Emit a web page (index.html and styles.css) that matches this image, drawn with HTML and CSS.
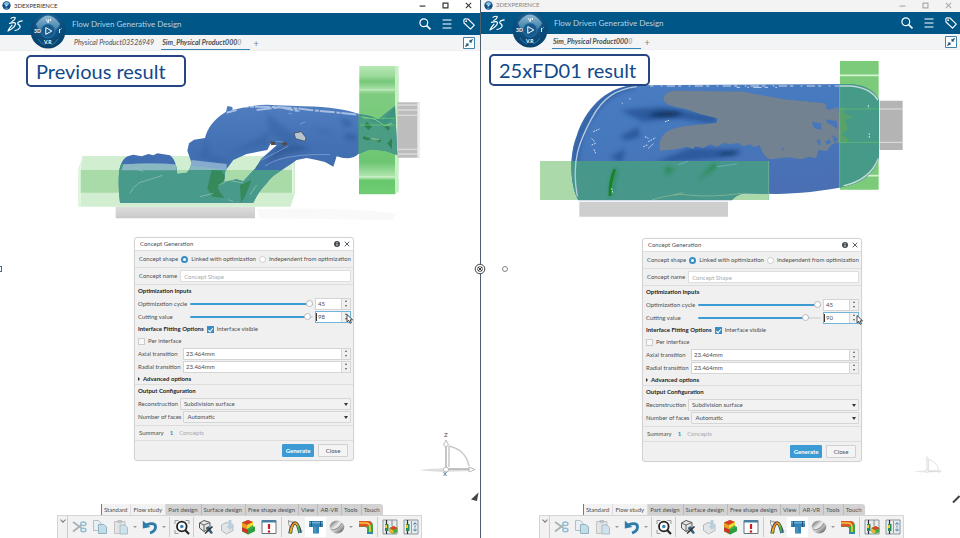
FILE: index.html
```html
<!DOCTYPE html>
<html lang="en">
<head>
<meta charset="utf-8">
<title>Flow Driven Generative Design</title>
<link rel="stylesheet" href="styles.css">
</head>
<body>
<svg class="defs" aria-hidden="true">
  <defs>
    <radialGradient id="compassFill" cx="50%" cy="30%" r="70%"><stop offset="0" stop-color="#2f7bac"/><stop offset=".6" stop-color="#0c4d7d"/><stop offset="1" stop-color="#083f69"/></radialGradient>
    <linearGradient id="compassTop" x1="0" y1="0" x2="0" y2="1"><stop offset="0" stop-color="#8fb9d2"/><stop offset="1" stop-color="#3d7fa8"/></linearGradient>
    <linearGradient id="rainbow" x1="0" y1="0" x2="1" y2="1"><stop offset="0" stop-color="#d8322a"/><stop offset=".35" stop-color="#f0b31e"/><stop offset=".65" stop-color="#4db548"/><stop offset="1" stop-color="#2a8fc4"/></linearGradient>
    <linearGradient id="metal" x1="0" y1="0" x2="1" y2="1"><stop offset="0" stop-color="#555"/><stop offset=".45" stop-color="#eee"/><stop offset="1" stop-color="#444"/></linearGradient>
  </defs>
  <symbol id="i-app" viewBox="0 0 10 10"><circle cx="5" cy="5" r="4.6" fill="#0d4f86"/><path d="M1.5 3.4Q5-1 8.5 3.4L5 5z" fill="#7fc0e6"/><path d="M4 3.8l2.6 1.3L4 6.5z" fill="#fff"/><path d="M3.5 8h3" stroke="#6fb3dd"/></symbol>
  <symbol id="i-ds" viewBox="0 0 16 17"><g fill="none" stroke="#fff" stroke-width="1.2" stroke-linecap="round" stroke-linejoin="round"><path d="M4 2.2Q7.200.6 8.200 1.700Q8.400 3.600 5 5.600"/><path d="M2.500 7.400Q8.800 5.600 8.400 8.200Q7.600 12 1 15Q2.600 11.800 5 9.200" /><path d="M15.200 4.800Q10.200 5.800 10.800 7.900Q13.800 9.600 12.900 11.700Q11.500 14 8 14.500"/></g></symbol>
  <symbol id="i-compass" viewBox="0 0 36 36"><circle cx="18" cy="18" r="17.5" fill="url(#compassFill)"/><path d="M6 11Q18-6 30 11Q27 18 23 17Q18 11 13 17Q8 18 6 11z" fill="url(#compassTop)"/><circle cx="18" cy="18" r="7" fill="#175b8d" stroke="#3b82b0" stroke-width=".6"/><path d="M15.8 14.6v6.8l6-3.4z" fill="none" stroke="#fff" stroke-width="1"/><path d="M16 6l2 3M19 6l-1 4M20.5 6v2" stroke="#fff" stroke-width=".9"/><path d="M8 26q3 5 7 6M28 26q-3 5-7 6" stroke="#2f79a8" fill="none"/><path d="M29.500 16v4M31.500 15.500l-1 1" stroke="#fff" stroke-width=".9"/></symbol>
  <symbol id="i-search" viewBox="0 0 12 12"><circle cx="4.8" cy="4.8" r="3.9" fill="none" stroke="#fff" stroke-width="1.2"/><path d="M7.6 7.6l3.9 3.7" stroke="#fff" stroke-width="1.6"/></symbol>
  <symbol id="i-menu" viewBox="0 0 12 12"><path d="M1.5 2h9M1.5 6h9M1.5 10h9" stroke="#fff" stroke-width="1.2"/></symbol>
  <symbol id="i-tag" viewBox="0 0 12 12"><path d="M.8 1.8l1-1 3.2.2 6.3 6.2-3.8 4L1 5z" fill="none" stroke="#fff" stroke-width="1.1" stroke-linejoin="round"/><circle cx="3.2" cy="3.2" r=".9" fill="#fff"/></symbol>
  <symbol id="i-min" viewBox="0 0 6 6"><path d="M.5 3.5h5" stroke="currentColor"/></symbol>
  <symbol id="i-max" viewBox="0 0 6 6"><path d="M.9.9h4.2v4.2H.9z" fill="none" stroke="currentColor"/></symbol>
  <symbol id="i-x" viewBox="0 0 6 6"><path d="M.7.7l4.6 4.6M5.3.7L.7 5.3" stroke="currentColor" stroke-width=".9"/></symbol>
  <symbol id="i-collapse" viewBox="0 0 12 12"><path d="M.5.5h11v11H.5z" fill="#fff" stroke="#3f83a9"/><path d="M6.5 5.5v-3l1 1L9.200 2l.8.8-1.600 1.700 1 1zM5.500 6.500v3l-1-1L2.800 10 2 9.200l1.600-1.700-1-1z" fill="#0b4a75"/></symbol>
  <symbol id="i-info" viewBox="0 0 6 6"><circle cx="3" cy="3" r="3" fill="#454a50"/><path d="M3 2.600v2.200M3 1.100v.9" stroke="#fff" stroke-width=".9"/></symbol>
  <symbol id="i-cut" viewBox="0 0 16 16"><path d="M2 3l8.500 6M2 12.500L10.500 6" stroke="#a9b4ba" stroke-width="2"/><ellipse cx="12.400" cy="4.800" rx="2.600" ry="1.800" fill="none" stroke="#8fbdd4" stroke-width="1.400"/><ellipse cx="12.400" cy="11" rx="2.600" ry="1.800" fill="none" stroke="#8fbdd4" stroke-width="1.400"/></symbol>
  <symbol id="i-copy" viewBox="0 0 16 16"><path d="M1.500 1.500h5l2.500 2.500v7.500H1.500z" fill="#e8eef1" stroke="#b4c0c6"/><path d="M6.500 5.500h5.500l2.500 2.500v6.500h-8z" fill="#c3dce8" stroke="#8fb4c6"/></symbol>
  <symbol id="i-paste" viewBox="0 0 16 16"><path d="M1.500 2.500h10.500v12H1.500z" fill="#e4e4e4" stroke="#c2c2c2"/><path d="M4.500 1h4.500v3H4.500z" fill="#bcc4c8"/><path d="M7 6h5l2.500 2.500v6.500H7z" fill="#cfe1ea" stroke="#a4c0ce"/></symbol>
  <symbol id="i-undo" viewBox="0 0 16 16"><path d="M4 6Q14 2.500 13.500 8.500Q13 12.500 8 14" fill="none" stroke="#2d7ba8" stroke-width="2.800"/><path d="M.8 1.800v7.800l7.500-1.600z" fill="#2d7ba8"/></symbol>
  <symbol id="i-fit" viewBox="0 0 16 16"><path d="M1 5V1.500h3.500M11.500 1.500H15V5M1 11v3.500h3.500" fill="none" stroke="#999"/><circle cx="7.800" cy="7.500" r="4.800" fill="#fff" stroke="#222" stroke-width="1.800"/><circle cx="7.800" cy="7.500" r="1.800" fill="#3987b5"/><path d="M11 11l4 4" stroke="#222" stroke-width="2.200"/></symbol>
  <symbol id="i-part" viewBox="0 0 16 16"><path d="M1.500 4L6 1.500l6 2v5.500L6 12.500 1.500 9z" fill="#e7e7e7" stroke="#555"/><path d="M6 6v6M1.500 4L6 6l6-2.500" stroke="#666" fill="none"/><path d="M7.500 9l3-2 4.500 7-2 1z" fill="#35617c"/><path d="M7 14.500l7.500-7" stroke="#343434" stroke-width="1.700"/></symbol>
  <symbol id="i-import" viewBox="0 0 16 16"><path d="M2.500 6L7 3.500l7 2v6L7.500 15l-5-3.500z" fill="#e2e4e5" stroke="#b5b9bc"/><path d="M9.500 1v6h-2l3.500 4 3.500-4h-2V1z" fill="#b3d0df"/></symbol>
  <symbol id="i-cube" viewBox="0 0 16 16"><path d="M2 3.500L8 1l5 2v4l2 1v4l-7 3.500-6-3z" fill="#40af43"/><path d="M2 3.500L8 1l5 2-6 3z" fill="#e33a23"/><path d="M2 4l5 2v4l-5-2z" fill="#f39a22"/><path d="M2 8.500l6 2.200V15l-6-3z" fill="#d82d24"/><path d="M7 6l6-3v3l-6 4z" fill="#f2db2f"/><path d="M8 11l7-3v4l-7 3.500z" fill="#2f9e40"/></symbol>
  <symbol id="i-alert" viewBox="0 0 16 16"><path d="M1 1.500h14v13H1z" fill="#fff" stroke="#67727a"/><path d="M1 1.500h14v2H1z" fill="#3f83ad"/><path d="M8 5v5" stroke="#c91f1f" stroke-width="2.200"/><circle cx="8" cy="12.500" r="1.200" fill="#c91f1f"/></symbol>
  <symbol id="i-arch" viewBox="0 0 16 16"><path d="M1.500 2.500Q8 1 15 13" stroke="#b5b5b5" stroke-width="1.600" fill="none"/><path d="M1.500 1v3.500l4 9" stroke="#999" fill="none"/><path d="M3 14.500Q5 4 8 4T13 14" fill="none" stroke="#34373a" stroke-width="3.600"/><path d="M3.200 14.500Q5 4 8 4T12.800 14" fill="none" stroke="url(#rainbow)" stroke-width="2.200"/></symbol>
  <symbol id="i-tee" viewBox="0 0 16 16"><path d="M1 2h14v6h-4v6.500H5V8H1z" fill="#3583b4"/><path d="M1 3.800h14" stroke="#8cc2e2"/><path d="M7 8v6.500" stroke="#62a8d0"/><path d="M3.500 2v6M12.500 2v6" stroke="#1c577e"/></symbol>
  <symbol id="i-ball" viewBox="0 0 16 16"><ellipse cx="8" cy="8" rx="7.300" ry="6.400" fill="url(#metal)"/><path d="M2 11q8 0 11-7" stroke="#777" fill="none" stroke-width=".8"/></symbol>
  <symbol id="i-elbow" viewBox="0 0 16 16"><path d="M1 2h9q5 0 5 5v8H9V9.500q0-1.500-2-1.500H1z" fill="#3da445"/><path d="M1 2h9q3 0 4 3L9 8Q8.500 7.500 7 7.500H1z" fill="#e2502c"/><path d="M1 4h7q4 0 4 5v6" fill="none" stroke="#f2ca36" stroke-width="1.600"/><path d="M9 13h6v2H9z" fill="#2d8ab5"/></symbol>
  <symbol id="i-study" viewBox="0 0 16 16"><path d="M1 1h14v14H1z" fill="#e9ecee" stroke="#8b969d"/><path d="M4.500 1v14" stroke="#333" stroke-width="1.200"/><path d="M3 5h3.500v7H3z" fill="#2d8b55"/><path d="M3 6h2v3H3z" fill="#f0cb38"/><path d="M10 1v6" stroke="#888"/><path d="M7.500 9l4-2 4 2v4l-4 2-4-2z" fill="#46ac42"/><path d="M7.500 9l4-2 4 2-4 2z" fill="#e43f28"/><path d="M7.500 9.500l4 2v3l-4-2z" fill="#f1b42c"/></symbol>
  <symbol id="i-panel" viewBox="0 0 16 16"><path d="M1 1h14v14H1z" fill="#e9ecee" stroke="#8b969d"/><path d="M4.500 1v14" stroke="#333" stroke-width="1.200"/><path d="M3 5h3.500v7H3z" fill="#2d8b55"/><path d="M3 6h2v3H3z" fill="#f0cb38"/><path d="M8.500 2v12" stroke="#999"/><path d="M12 3.500v9M10.500 5.500l1.500-2 1.500 2M10.500 10.500l1.500 2 1.500-2" fill="none" stroke="#3c7ea8" stroke-dasharray="2 1"/></symbol>
  <symbol id="i-cursor" viewBox="0 0 8 10"><path d="M1 .6v7.200l1.800-1.500 1.200 3 1.400-.6-1.200-2.900h2.400z" fill="#fff" stroke="#222" stroke-width=".8"/></symbol>
  <symbol id="i-triad" viewBox="0 0 64 48"><path d="M1 39q20-3 50-1v2q-30 2-50-1z" fill="#ddd"/><path d="M28 14v24h26" fill="none" stroke="#b4b4b4" stroke-width="1.500"/><path d="M31 15q17 4 20 20M31 36V15" fill="none" stroke="#ccc" stroke-width="1.600"/><path d="M25.500 14l2.500-5 2.500 5-2.500 2zM51 36l6 2.500-6 2.500z" fill="#fff" stroke="#aaa" stroke-width=".8"/><circle cx="28" cy="38.500" r="2.500" fill="#fff" stroke="#aaa" stroke-width=".8"/></symbol>
</svg>

<main class="compare">
  <section class="pane pane-left" aria-label="Previous result">
    <div class="titlebar"><svg class="app"><use href="#i-app"/></svg><span>3DEXPERIENCE</span>
      <div class="winbtns"><button aria-label="Minimize"><svg><use href="#i-min"/></svg></button><button aria-label="Maximize"><svg><use href="#i-max"/></svg></button><button aria-label="Close window"><svg><use href="#i-x"/></svg></button></div></div>
    <header class="topbar"><svg class="ds"><use href="#i-ds"/></svg><button class="compass" aria-label="Compass"><svg viewBox="0 0 36 36"><use href="#i-compass"/><text x="4" y="20">3D</text><text x="14" y="31">V.R</text></svg></button><h1>Flow Driven Generative Design</h1>
      <div class="tools"><button aria-label="Search"><svg><use href="#i-search"/></svg></button><button aria-label="Menu"><svg><use href="#i-menu"/></svg></button><button aria-label="Tags"><svg><use href="#i-tag"/></svg></button></div></header>
    <nav class="tabs"><a href="#">Physical Product03526949</a><a href="#" class="active">Sim_Physical Product000<span>0</span></a><button class="add" aria-label="New tab">+</button><button class="collapse" aria-label="Collapse"><svg><use href="#i-collapse"/></svg></button></nav>
    <div class="viewport">
      <svg class="model" viewBox="-210 -27 1440 534" role="img" aria-label="Generated shape">
        <defs>
          <linearGradient id="lb" x1="0" y1="0" x2="0" y2="1"><stop offset="0" stop-color="#4f7dc0"/><stop offset=".4" stop-color="#4371b3"/><stop offset="1" stop-color="#3c68a8"/></linearGradient>
          <linearGradient id="lg" x1="0" y1="0" x2="0" y2="1"><stop offset="0" stop-color="#b6e8b4"/><stop offset=".08" stop-color="#9ad99a"/><stop offset=".12" stop-color="#76c878"/><stop offset=".18" stop-color="#a5dfa4"/><stop offset=".22" stop-color="#7fcc80"/><stop offset=".75" stop-color="#6dc672"/><stop offset=".87" stop-color="#b6e8b4"/><stop offset=".89" stop-color="#68c86c"/><stop offset="1" stop-color="#70cd73"/></linearGradient>
          <linearGradient id="ls" x1="0" y1="0" x2="0" y2="1"><stop offset="0" stop-color="#ddd"/><stop offset="1" stop-color="#c9c9c9"/></linearGradient>
          <path id="lshape" clip-rule="evenodd" fill-rule="evenodd" d="M148 330C155 300 163 288 190 284L215 289 235 282 250 286 262 280 300 286C318 300 320 325 322 342L350 338Q367 322 362 301L352 272 357 250 372 239 405 234C412 205 430 178 468 155L472 138 487 141 488 150Q560 130 620 136L700 139C780 140 830 150 868 162L900 168 925 178 975 138 982 285 945 272 900 268 865 282C850 297 825 298 800 289L790 320 765 306 740 300 710 294 680 300C640 330 610 340 590 370Q565 395 550 428L150 428Q143 370 148 330zM466 332L490 300 530 282 592 270 604 247 620 256 574 296 556 325 520 364 500 358 462 366z"/>
          <clipPath id="lclip"><use href="#lshape" clip-rule="evenodd"/></clipPath>
          <filter id="lsoft"><feGaussianBlur stdDeviation="6"/></filter>
        </defs>
        <path d="M560 448Q800 440 980 460L970 480 570 475z" fill="#f9f9f9"/>
        <path d="M137 440h418v35H137z" fill="url(#ls)"/><path d="M145 428h415v12H145z" fill="#efefeb"/>
        <path d="M37 288h638v110l-13 42H25V330z" fill="#d1efd0"/><path d="M30 330h638v68H30z" fill="#a8dba8"/><path d="M37 288l-7 42v110M668 310v90" stroke="#e9f9e8" stroke-width="4" fill="none"/>
        <path d="M868 18h117v375l-10 10H867z" fill="url(#lg)"/><path d="M975 18h10v375l-10 10z" fill="#c8f0c6"/><path d="M866 90h108M866 350h108" stroke="#caf1c8" stroke-width="3"/>
        <path d="M982 127h68v166h-68z" fill="#bdbdbd"/><path d="M982 135h60M982 150h60M982 166h60M982 268h60M982 282h60" stroke="#dadada" stroke-width="4"/><path d="M1042 127h8v166h-8z" fill="#ececec"/>
        <use href="#lshape" fill="url(#lb)"/>
        <g clip-path="url(#lclip)">
          <path d="M590 160L690 240 650 250 600 220zM480 280L560 240 600 210 590 255zM410 240L420 290 480 300 450 310 390 290z" fill="#335e9e" opacity=".45" filter="url(#lsoft)"/>
          <path d="M815 175l30 15-8 10-18-8zM825 220l35 8-5 12-28-6zM720 200l75 22-30-5zM620 262l60-10 40 15-80 16-50 30z" fill="#2c4f8a" opacity=".55" filter="url(#lsoft)"/>
          <path d="M490 142Q620 136 720 150L868 164M560 150l70-8 60 12M470 158l30-8" fill="none" stroke="#cddcf2" stroke-width="6" stroke-dasharray="45 5 12 3" opacity=".7"/>
          <path d="M585 318Q640 280 780 284M690 192l15-6M655 160l12 2M605 250l20-6 20 4M575 300l80-42" fill="none" stroke="#9dbce4" stroke-width="2" opacity=".8"/>
          <path d="M140 313Q300 305 470 330H660V440H140z" fill="#489a8b"/>
          <path d="M160 313q100-7 158 0l3 18H155zM365 300l105 12v18H350z" fill="#a5c4da" opacity=".7"/>
          <path d="M425 330l30 2 12 22-25 30 20 30-35-4-15-25zM510 375l35-15-20 50-12 18zM540 320l30-5-40 30z" fill="#2d8247" opacity=".7"/>
          <path d="M180 400q8-20 28-32l70-22M195 322q10 10 25 12M445 376l30-15 45 8M390 410l40-10M490 425l-15-6M560 375l-20 30" fill="none" stroke="#97c8ae" stroke-width="2"/>
          <path d="M865 130h120v160H865z" fill="#4a9c85"/><path d="M868 164l42 5 30 12 35-43v35l-38 25z" fill="#368f7d" opacity=".6"/>
          <path d="M890 185l16 15-10 10-14-12zM880 228l22 8-8 6-16-6zM915 237l20 3-8 8zM952 250l14-16v34zM930 188l30 14-5 10z" fill="#24763f" opacity=".7"/>
          <path d="M875 170l40 8 30 20 20-8M905 235l22 5" fill="none" stroke="#c8dd97" stroke-width="2"/>
        </g>
        <path d="M870 195h105M880 175h95" stroke="#66d46d" stroke-width="2"/>
        <path d="M672 219l22-4 14 18-3 11-28-8z" fill="#b9c4cf" stroke="#33404f" stroke-width="2"/><path d="M600 243l16 3 2 8-14 2zM632 250l14-5 8 8-14 4z" fill="#544b4b"/>
      </svg>
      <p class="caption">Previous result</p>
      <svg class="triad" viewBox="0 0 64 48"><use href="#i-triad"/><text x="26" y="6">Z</text><text x="25" y="45">X</text></svg>
      <svg class="pointer" viewBox="0 0 8 10"><path d="M0 7.500L7.500.5 6 9z" fill="#444"/></svg>
      <form class="dialog" aria-label="Concept Generation">
        <div class="dlg-title"><h2>Concept Generation</h2><button type="button" aria-label="Information"><svg><use href="#i-info"/></svg></button><button type="button" aria-label="Close dialog"><svg><use href="#i-x"/></svg></button></div>
        <div class="row shape"><span>Concept shape</span><input type="radio" name="shape-a" id="a-linked" checked><label for="a-linked">Linked with optimization</label><input type="radio" name="shape-a" id="a-indep"><label for="a-indep">Independent from optimization</label></div>
        <div class="row name"><label for="a-name">Concept name</label><input class="text" id="a-name" placeholder="Concept Shape"></div>
        <div class="group">
          <h3>Optimization Inputs</h3>
          <div class="line"><label class="slide-label" for="a-cycle">Optimization cycle</label><input type="range" id="a-cycle" min="0" max="45" value="45" style="--fill:100%"><div class="spin short"><input aria-label="Optimization cycle value" value="45"><span><button type="button" aria-label="Increase"></button><button type="button" aria-label="Decrease"></button></span></div></div>
          <div class="line"><label class="slide-label" for="a-cut">Cutting value</label><input type="range" id="a-cut" min="0" max="100" value="98" style="--fill:98%"><div class="spin short focus"><input aria-label="Cutting value number" value="98"><span><button type="button" aria-label="Increase"></button><button type="button" aria-label="Decrease"></button></span><svg class="cursor"><use href="#i-cursor"/></svg></div></div>
          <div class="option"><h3>Interface Fitting Options</h3><input type="checkbox" id="a-vis" checked><label for="a-vis">Interface visible</label></div>
          <div class="option"><input type="checkbox" id="a-per"><label for="a-per">Per interface</label></div>
          <div class="line"><label class="field-label" for="a-axial">Axial transition</label><div class="spin"><input id="a-axial" value="23.464mm"><span><button type="button" aria-label="Increase"></button><button type="button" aria-label="Decrease"></button></span></div></div>
          <div class="line"><label class="field-label" for="a-radial">Radial transition</label><div class="spin"><input id="a-radial" value="23.464mm"><span><button type="button" aria-label="Increase"></button><button type="button" aria-label="Decrease"></button></span></div></div>
          <button type="button" class="advanced">Advanced options</button>
        </div>
        <div class="group">
          <h3>Output Configuration</h3>
          <div class="line"><label for="a-rec">Reconstruction</label><div class="drop"><select id="a-rec"><option>Subdivision surface</option></select></div></div>
          <div class="line"><label for="a-faces">Number of faces</label><div class="drop"><select id="a-faces"><option>Automatic</option></select></div></div>
        </div>
        <div class="summary"><span>Summary</span><b>1</b><span class="muted">Concepts</span></div>
        <div class="footer"><button type="button" class="primary">Generate</button><button type="button">Close</button></div>
      </form>
    </div>
    <div class="dock">
      <div class="dock-tabs"><button class="on">Standard</button><button class="on">Flow study</button><button>Part design</button><button>Surface design</button><button>Free shape design</button><button>View</button><button>AR-VR</button><button>Tools</button><button>Touch</button></div>
      <div class="dock-bar"><button class="handle" aria-label="Collapse toolbar"></button><button aria-label="Cut"><svg><use href="#i-cut"/></svg></button><button aria-label="Copy"><svg><use href="#i-copy"/></svg></button><button aria-label="Paste"><svg><use href="#i-paste"/></svg></button><button class="more" aria-label="Paste options"></button><button aria-label="Undo"><svg><use href="#i-undo"/></svg></button><button class="more" aria-label="Undo options"></button><hr><button aria-label="Fit all"><svg><use href="#i-fit"/></svg></button><hr><button aria-label="Part"><svg><use href="#i-part"/></svg></button><button aria-label="Import"><svg><use href="#i-import"/></svg></button><button aria-label="Result"><svg><use href="#i-cube"/></svg></button><button aria-label="Check"><svg><use href="#i-alert"/></svg></button><hr class="wide"><button aria-label="Generate shape"><svg><use href="#i-arch"/></svg></button><button class="lit" aria-label="Pipe"><svg><use href="#i-tee"/></svg></button><button aria-label="Material"><svg><use href="#i-ball"/></svg></button><button class="more" aria-label="Material options"></button><button aria-label="Flow"><svg><use href="#i-elbow"/></svg></button><hr><button aria-label="Study results"><svg><use href="#i-study"/></svg></button><button aria-label="Study panel"><svg><use href="#i-panel"/></svg></button></div>
    </div>
    <span class="grip" aria-hidden="true"></span>
  </section>

  <section class="pane pane-right" aria-label="25xFD01 result">
    <div class="titlebar"><svg class="app"><use href="#i-app"/></svg><span>3DEXPERIENCE</span>
      <div class="winbtns"><button aria-label="Minimize"><svg><use href="#i-min"/></svg></button><button aria-label="Maximize"><svg><use href="#i-max"/></svg></button><button aria-label="Close window"><svg><use href="#i-x"/></svg></button></div></div>
    <header class="topbar"><svg class="ds"><use href="#i-ds"/></svg><button class="compass" aria-label="Compass"><svg viewBox="0 0 36 36"><use href="#i-compass"/><text x="4" y="20">3D</text><text x="14" y="31">V.R</text></svg></button><h1>Flow Driven Generative Design</h1>
      <div class="tools"><button aria-label="Search"><svg><use href="#i-search"/></svg></button><button aria-label="Menu"><svg><use href="#i-menu"/></svg></button><button aria-label="Tags"><svg><use href="#i-tag"/></svg></button></div></header>
    <nav class="tabs"><a href="#" class="active">Sim_Physical Product000<span>0</span></a><button class="add" aria-label="New tab">+</button><button class="collapse" aria-label="Collapse"><svg><use href="#i-collapse"/></svg></button></nav>
    <div class="viewport">
      <svg class="model" viewBox="-147 0 1437 530" role="img" aria-label="Generated shape">
        <defs>
          <linearGradient id="rb" x1="0" y1="0" x2=".3" y2="1"><stop offset="0" stop-color="#4a7cc1"/><stop offset=".5" stop-color="#4678bd"/><stop offset="1" stop-color="#4a6fb2"/></linearGradient>
          <path id="rshape" d="M145 451C118 400 118 310 140 258C165 180 225 112 310 106L960 102C1010 105 1035 125 1047 150V325C1035 360 1010 395 950 408C880 425 800 430 740 432L640 430Q618 436 605 451z"/>
          <clipPath id="rclip"><use href="#rshape"/></clipPath>
          <filter id="rsoft"><feGaussianBlur stdDeviation="7"/></filter>
        </defs>
        <path d="M148 455h446v45H148z" fill="#cecece"/>
        <path d="M1049 152h69v148h-69z" fill="#b4b4b4"/><path d="M1049 177h69M1049 277h69" stroke="#e2e2e2" stroke-width="3"/>
        <path d="M930 33h116v386H930z" fill="#7bcb7a"/><path d="M930 76h116M930 377h116" stroke="#d3f3d1" stroke-width="5"/>
        <path d="M30 333h686v117H30z" fill="#abd9a9"/>
        <use href="#rshape" fill="url(#rb)"/>
        <g clip-path="url(#rclip)">
          <path d="M145 440C120 350 140 260 175 205S250 118 310 106" fill="none" stroke="#2c5997" stroke-width="22" opacity=".6" filter="url(#rsoft)"/>
          <path d="M270 180L400 170 560 200 555 222 440 205 340 215zM270 260l55-30 5 30-40 12zM240 320l45-22-10 40zM370 340L480 295 640 300 560 325 430 335z" fill="#244f91" opacity=".7" filter="url(#rsoft)"/>
          <path d="M350 195q70-17 110-3-50 12-110 3zM560 315q45-12 70-6-30 10-70 6z" fill="#0d264e" filter="url(#rsoft)"/>
          <path d="M400 145C405 128 420 122 440 122L640 125 760 148 885 160 892 180 925 172 935 275 905 283 890 303 865 300 858 325 838 320 815 328 775 322 720 328C700 318 695 300 688 285L672 291 660 283 640 289 625 279 600 283 582 278 560 290 540 283 520 294 495 289 490 297 470 290 440 298 390 302C385 275 395 255 415 242C450 225 510 225 560 218L562 205 510 192 470 178C430 170 400 165 400 145z" fill="#738291"/>
          <path d="M845 215l28 5 2 20-22-5zM885 208l35 5 4 25-32-20zM860 270l10-3 2 20-8-5zM885 275l14-8 4 12-12 5zM755 292l7 3-2 8zM905 255l20 12-10 12z" fill="#4777ba"/>
          <path d="M30 333h686v117H30z" fill="#47988b"/><path d="M929 90h120v330H929z" fill="#469a88"/>
          <path d="M260 350q-25 35-20 90 9 0 12-45 12-25 8-45zM405 350l30 5-25 22zM550 340l15 8-65 45z" fill="#188329" opacity=".6" filter="url(#rsoft)"/>
          <path d="M254 358q-16 40-14 80" stroke="#198124" stroke-width="8" fill="none"/>
          <path d="M930 175l15-3-5 18 30 10-25 10 10 28-20 16 25 14-15 12-20-4zM955 180l12 5" fill="#62a758" opacity=".6"/>
          <path d="M142 440C122 330 150 270 185 205S260 118 320 110" fill="none" stroke="#b5cbe2" stroke-width="4"/>
          <path d="M360 108h570M620 112h130" stroke="#e1ebf8" stroke-width="3" stroke-dasharray="10 22 5 13 25 9" opacity=".85"/>
          <path d="M930 108h30Q1020 112 1044 150M1046 325Q1020 390 940 408" fill="none" stroke="#bed9d3" stroke-width="5"/>
          <path d="M190 245l18-8M185 265l9 10M185 285l12-5M192 298l5 12M345 260l10 5M355 275l22-12M340 290l14-6M355 295l15-14M298 145l5 4M275 158l3 3M1015 165v10M1018 250v15M245 415l4 16M405 215l12-4" stroke="#d7e6f5" stroke-width="3" stroke-dasharray="5 3"/>
          <path d="M365 450q70-22 110-15 70 8 160-5M430 435l30-7" fill="none" stroke="#93bd99" stroke-width="2"/>
          <path d="M560 350l60-8M445 345l30-12" stroke="#6aaeb0" stroke-width="3"/>
        </g>
        <path d="M930 177h116M930 277h116" stroke="#61c36c" stroke-width="2"/><path d="M929 102v310M716 333v117" stroke="#78c39b" stroke-width="2"/>
      </svg>
      <p class="caption">25xFD01 result</p>
      <svg class="triad" viewBox="0 0 64 48"><use href="#i-triad"/></svg>
      <svg class="pointer" viewBox="0 0 8 10"><path d="M1 8.500L7.500 2" stroke="#444" stroke-width="2"/></svg>
      <form class="dialog" aria-label="Concept Generation">
        <div class="dlg-title"><h2>Concept Generation</h2><button type="button" aria-label="Information"><svg><use href="#i-info"/></svg></button><button type="button" aria-label="Close dialog"><svg><use href="#i-x"/></svg></button></div>
        <div class="row shape"><span>Concept shape</span><input type="radio" name="shape-b" id="b-linked" checked><label for="b-linked">Linked with optimization</label><input type="radio" name="shape-b" id="b-indep"><label for="b-indep">Independent from optimization</label></div>
        <div class="row name"><label for="b-name">Concept name</label><input class="text" id="b-name" placeholder="Concept Shape"></div>
        <div class="group">
          <h3>Optimization Inputs</h3>
          <div class="line"><label class="slide-label" for="b-cycle">Optimization cycle</label><input type="range" id="b-cycle" min="0" max="45" value="45" style="--fill:100%"><div class="spin short"><input aria-label="Optimization cycle value" value="45"><span><button type="button" aria-label="Increase"></button><button type="button" aria-label="Decrease"></button></span></div></div>
          <div class="line"><label class="slide-label" for="b-cut">Cutting value</label><input type="range" id="b-cut" min="0" max="100" value="90" style="--fill:90%"><div class="spin short focus"><input aria-label="Cutting value number" value="90"><span><button type="button" aria-label="Increase"></button><button type="button" aria-label="Decrease"></button></span><svg class="cursor"><use href="#i-cursor"/></svg></div></div>
          <div class="option"><h3>Interface Fitting Options</h3><input type="checkbox" id="b-vis" checked><label for="b-vis">Interface visible</label></div>
          <div class="option"><input type="checkbox" id="b-per"><label for="b-per">Per interface</label></div>
          <div class="line"><label class="field-label" for="b-axial">Axial transition</label><div class="spin"><input id="b-axial" value="23.464mm"><span><button type="button" aria-label="Increase"></button><button type="button" aria-label="Decrease"></button></span></div></div>
          <div class="line"><label class="field-label" for="b-radial">Radial transition</label><div class="spin"><input id="b-radial" value="23.464mm"><span><button type="button" aria-label="Increase"></button><button type="button" aria-label="Decrease"></button></span></div></div>
          <button type="button" class="advanced">Advanced options</button>
        </div>
        <div class="group">
          <h3>Output Configuration</h3>
          <div class="line"><label for="b-rec">Reconstruction</label><div class="drop"><select id="b-rec"><option>Subdivision surface</option></select></div></div>
          <div class="line"><label for="b-faces">Number of faces</label><div class="drop"><select id="b-faces"><option>Automatic</option></select></div></div>
        </div>
        <div class="summary"><span>Summary</span><b>1</b><span class="muted">Concepts</span></div>
        <div class="footer"><button type="button" class="primary">Generate</button><button type="button">Close</button></div>
      </form>
    </div>
    <div class="dock">
      <div class="dock-tabs"><button class="on">Standard</button><button class="on">Flow study</button><button>Part design</button><button>Surface design</button><button>Free shape design</button><button>View</button><button>AR-VR</button><button>Tools</button><button>Touch</button></div>
      <div class="dock-bar"><button class="handle" aria-label="Collapse toolbar"></button><button aria-label="Cut"><svg><use href="#i-cut"/></svg></button><button aria-label="Copy"><svg><use href="#i-copy"/></svg></button><button aria-label="Paste"><svg><use href="#i-paste"/></svg></button><button class="more" aria-label="Paste options"></button><button aria-label="Undo"><svg><use href="#i-undo"/></svg></button><button class="more" aria-label="Undo options"></button><hr><button aria-label="Fit all"><svg><use href="#i-fit"/></svg></button><hr><button aria-label="Part"><svg><use href="#i-part"/></svg></button><button aria-label="Import"><svg><use href="#i-import"/></svg></button><button aria-label="Result"><svg><use href="#i-cube"/></svg></button><button aria-label="Check"><svg><use href="#i-alert"/></svg></button><hr class="wide"><button aria-label="Generate shape"><svg><use href="#i-arch"/></svg></button><button class="lit" aria-label="Pipe"><svg><use href="#i-tee"/></svg></button><button aria-label="Material"><svg><use href="#i-ball"/></svg></button><button class="more" aria-label="Material options"></button><button aria-label="Flow"><svg><use href="#i-elbow"/></svg></button><hr><button aria-label="Study results"><svg><use href="#i-study"/></svg></button><button aria-label="Study panel"><svg><use href="#i-panel"/></svg></button></div>
    </div>
    <svg class="split-handle" viewBox="0 0 34 12" aria-hidden="true"><circle cx="6" cy="6" r="4.800" fill="#fff" stroke="#444"/><circle cx="6" cy="6" r="2.500" fill="none" stroke="#555" stroke-width=".8"/><path d="M4 4l4 4M8 4L4 8" stroke="#333"/><circle cx="31" cy="6" r="2.500" fill="#fff" stroke="#777" stroke-width=".9"/></svg>
  </section>
</main>
</body>
</html>
```

FILE: styles.css
```css
* { box-sizing: border-box; }
body { margin: 0; background: #fff; color: #4b4f53; font: 6px/8px Lato, "Noto Sans", sans-serif; }
button, input, select { font: inherit; color: inherit; margin: 0; padding: 0; border: 0; background: none; }
button { display: flex; align-items: center; justify-content: center; }
h1, h2, h3, p { margin: 0; font: inherit; }
a { color: inherit; text-decoration: none; }
svg { display: block; }
.defs { position: absolute; width: 0; height: 0; }

.compare { display: grid; grid-template-columns: 1fr 1fr; min-height: 100vh; overflow: hidden; }
.pane { position: relative; display: flex; flex-direction: column; min-width: 0; }
.pane-right { border-left: 1px solid #4d5d6d; padding-left: 1px; }

.titlebar { display: flex; align-items: center; gap: 3px; height: 13px; padding: 0 8px 2px 2px; color: #333; }
.titlebar .app { width: 9px; height: 9px; }
.winbtns { display: flex; gap: 16px; margin-left: auto; }
.winbtns svg { width: 7px; height: 7px; }
.pane-right .titlebar { height: 12px; margin-left: -1px; padding-left: 3px; background: #f3f3f3; color: #888; }
.pane-right .winbtns { color: #aaa; }

.topbar { position: relative; display: flex; align-items: center; height: 22px; padding: 0 5px 0 7px; background: #005686; color: #b8d3e2; }
.pane-right .topbar { margin-left: -1px; padding: 0 3px 0 8px; }
.topbar .ds { width: 16px; height: 17px; }
.topbar h1 { margin-left: 49px; font-size: 8px; line-height: 12px; }
.compass { position: absolute; left: 30px; top: 0; z-index: 2; }
.pane-right .compass { left: 31px; }
.compass svg { width: 36px; height: 36px; }
.compass text { font: bold 5px Lato, sans-serif; fill: #fff; }
.tools { display: flex; gap: 10px; margin-left: auto; }
.tools svg { width: 12px; height: 12px; }

.tabs { display: flex; align-items: center; height: 16px; padding: 0 5px 0 73px; background: #f3f4f5; font-size: 7px; font-style: italic; border-bottom: 1px solid #f0f0f0; }
.tabs a { height: 14px; padding: 0 1px; line-height: 13px; }
.tabs a + a { margin-left: 6px; }
.tabs .active { padding-right: 9px; font-weight: bold; border-bottom: 1px solid #2f86b5; }
.tabs .active span { color: #aaa; }
.tabs .add { margin-left: 3px; color: #888; font-size: 10px; font-style: normal; }
.tabs .collapse { margin-left: auto; }
.collapse svg { width: 12px; height: 12px; }
.pane-right .tabs { margin-left: -1px; padding: 0 3px 0 71px; }

.viewport { position: relative; flex: 1; min-height: 420px; }
.model { position: absolute; left: 0; top: 0; width: 100%; }
.pane-right .model { left: -1px; width: calc(100% + 1px); }
.caption { position: absolute; left: 26px; top: 4px; padding: 2px 18px 2px 8px; border: 2px solid #254583; border-radius: 5px; background: #fff; color: #12498b; font-size: 20px; line-height: 24px; }
.pane-right .caption { left: 7px; padding-right: 12px; }
.triad { position: absolute; right: -2px; top: 380px; width: 64px; height: 48px; }
.pane-right .triad { right: 15px; top: 402px; width: 32px; height: 24px; opacity: .7; }
.triad text { font: 6px Lato, sans-serif; fill: #444; }
.pointer { position: absolute; right: 1px; top: 441px; width: 8px; height: 10px; }
.pane-right .pointer { right: 0; top: 444px; }
.grip { position: absolute; left: 0; top: 266px; width: 2px; height: 6px; border: 1px solid #35729e; border-left: 0; }
.split-handle { position: absolute; left: -7px; top: 263px; width: 34px; height: 12px; }

.dialog { position: absolute; left: 134px; top: 186px; width: 220px; border: 1px solid #d3d3d3; border-radius: 3px; background: #f0f0f0; box-shadow: 0 0 2px #0001; }
.pane-right .dialog { left: 160px; top: 188px; }
.dlg-title { display: flex; align-items: center; gap: 4px; height: 13px; padding: 0 3px 0 5px; border-bottom: 1px solid #ddd; border-radius: 3px 3px 0 0; background: #fff; }
.dlg-title h2 { flex: 1; }
.dlg-title svg { width: 6px; height: 6px; }
.row { display: flex; align-items: center; gap: 3px; height: 17px; padding: 0 2px 0 4px; border-bottom: 1px solid #ddd; }
.text { flex: 1; min-width: 0; height: 12px; padding: 0 3px; border: 1px solid #ddd; background: #fff; }
::placeholder { color: #aaa; opacity: 1; }
input[type="radio"] { appearance: none; width: 7px; height: 7px; border: 1px solid #ccc; border-radius: 50%; background: #fff; }
input[type="radio"]:checked { border: 2px solid #368ec4; }
.group { padding: 0 2px 0 3px; border-bottom: 1px solid #ddd; }
.group + .group { padding-bottom: 2px; }
h3 { height: 12px; color: #222; font-weight: bold; line-height: 12px; }
.line { display: flex; align-items: center; gap: 2px; height: 13px; }
.slide-label { width: 50px; }
.field-label { width: 43px; }
input[type="range"] { appearance: none; flex: 1; min-width: 0; height: 8px; }
input[type="range"]::-webkit-slider-runnable-track { height: 2px; border-radius: 1px; background: linear-gradient(to right, #3d9bd3 var(--fill), #ddd var(--fill)); }
input[type="range"]::-webkit-slider-thumb { appearance: none; width: 7px; height: 7px; margin-top: -3px; border: 1px solid #bbb; border-radius: 50%; background: #fff; }
.spin { position: relative; display: flex; flex: 1; height: 12px; border: 1px solid #d5d5d5; background: #fff; }
.spin.short { flex: none; width: 36px; }
.spin.focus { border-color: #72b5da; }
.spin input { flex: 1; width: 0; min-width: 0; padding: 0 2px; }
.spin.focus input { margin: 1px 0; padding-left: 1px; border-left: 1px solid #333; }
.spin span { display: flex; flex-direction: column; justify-content: space-around; align-items: center; width: 9px; border-left: 1px solid #d5d5d5; background: #f0f0f0; }
.spin button::before { content: ""; border: 1px solid transparent; border-bottom: 2px solid #555; border-top: 0; }
.spin button + button::before { border: 1px solid transparent; border-top: 2px solid #555; border-bottom: 0; }
.cursor { position: absolute; right: -4px; top: 2px; width: 8px; height: 10px; z-index: 2; }
.pane-right .cursor { right: -6px; }
.option { display: flex; align-items: center; gap: 3px; height: 12px; }
input[type="checkbox"] { appearance: none; display: grid; place-items: center; width: 7px; height: 7px; border: 1px solid #ccc; background: #f8f8f8; }
input[type="checkbox"]:checked { border-color: #368ec4; background: #368ec4; }
input[type="checkbox"]:checked::before { content: ""; width: 2px; height: 4px; border: solid #fff; border-width: 0 1px 1px 0; transform: rotate(40deg); }
.advanced { height: 11px; gap: 3px; color: #222; font-weight: bold; }
.advanced::before { content: ""; border: 2px solid transparent; border-left-color: #333; border-right: 0; }
.drop { position: relative; flex: 1; }
.drop select { display: block; appearance: none; width: 100%; height: 12px; padding: 0 3px; border: 1px solid #d5d5d5; border-radius: 1px; background: #f2f2f2; }
.drop::after { content: ""; position: absolute; right: 3px; top: 5px; border: 2px solid transparent; border-top: 3px solid #333; border-bottom: 0; }
.summary { display: flex; align-items: center; gap: 6px; height: 15px; padding: 0 4px; border-bottom: 1px solid #ddd; }
.summary b { color: #368ec4; }
.muted { color: #aaa; }
.footer { display: flex; justify-content: flex-end; gap: 4px; padding: 3px 5px; }
.footer button { width: 30px; height: 13px; border: 1px solid #d0d0d0; border-radius: 1px; background: #f4f4f4; }
.footer .primary { width: 32px; border-color: #3c9bd4; background: #3c9bd4; color: #fff; font-weight: bold; }

.dock { display: flex; flex-direction: column; align-items: flex-start; margin-left: 57px; }
.dock-tabs { display: flex; height: 11px; margin-left: 44px; border-left: 1px solid #368ec4; border-radius: 0 3px 0 0; background: #d2d2d2; overflow: hidden; }
.dock-tabs button { padding: 0 3px 0 2px; border-right: 1px solid #bbb; }
.dock-tabs button:last-child { border-right: 0; }
.dock-tabs .on { background: #f2f2f2; border-right-color: #ddd; }
.dock-bar { display: flex; align-items: center; height: 23px; border: 1px solid #d5d5d5; border-bottom: 0; background: #f2f2f2; }
.dock-bar button { width: 21px; height: 20px; }
.dock-bar .handle { width: 10px; height: 22px; padding-top: 4px; align-items: flex-start; border-right: 1px solid #ccc; }
.handle::before { content: ""; width: 3px; height: 3px; margin-top: -2px; border: solid #777; border-width: 0 1px 1px 0; transform: rotate(45deg); }
.dock-bar svg { width: 16px; height: 16px; }
.dock-bar .more { width: 8px; }
.more::before { content: ""; border: 2px solid transparent; border-top-color: #999; border-bottom: 0; }
.dock-bar .lit { background: #fff; }
.dock-bar hr { width: 1px; height: 20px; margin: 0 1px; border: 0; background: #ccc; }
.dock-bar .wide { margin: 0 2px; }
```
